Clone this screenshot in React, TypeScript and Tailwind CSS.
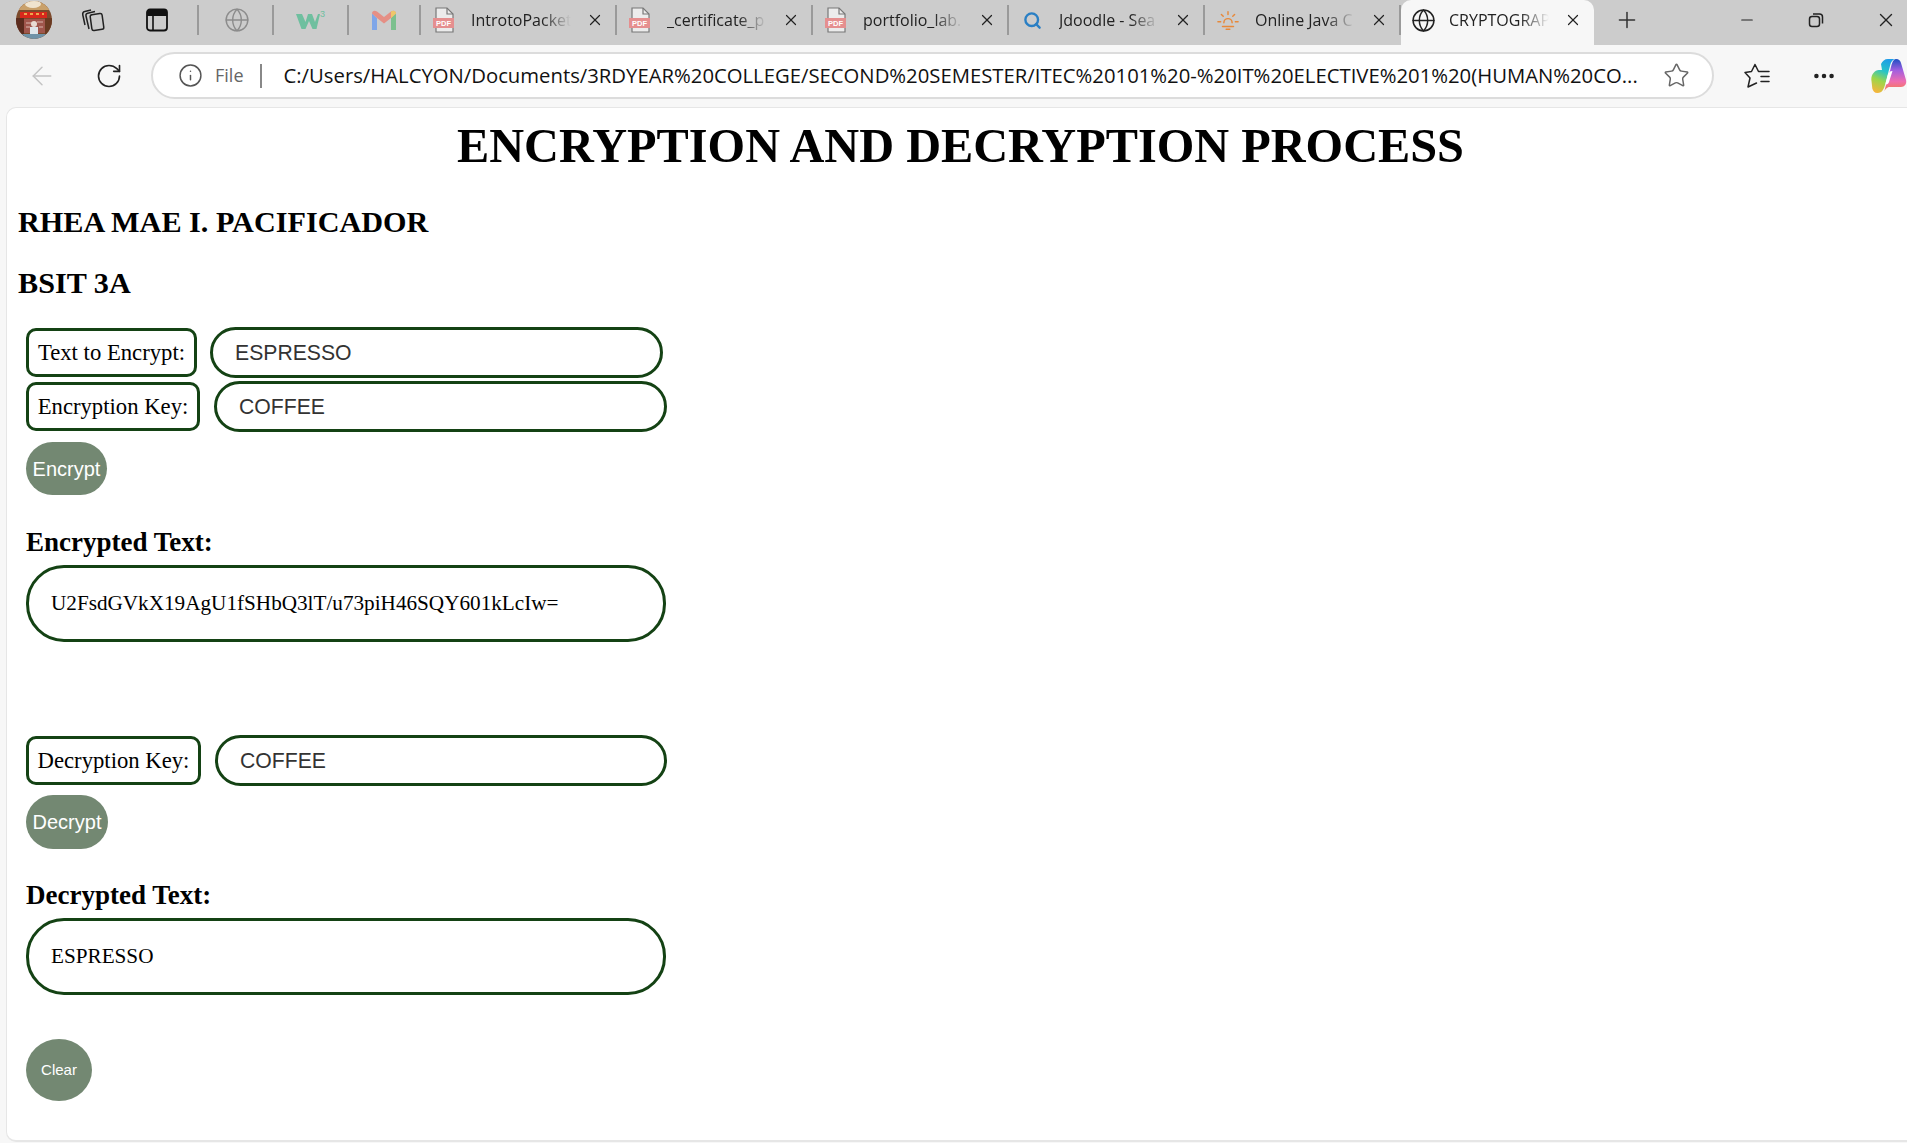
import { X, Plus, Minus, ArrowLeft, RotateCw, Info, Star, MoreHorizontal, Globe, Search } from "lucide-react";
import type { ReactNode } from "react";

const SERIF = "font-['Liberation_Serif',serif]";
const UI = "font-['Open_Sans',sans-serif]";
const FADE = "[mask-image:linear-gradient(to_right,black_68%,transparent_96%)]";

function PdfIcon() {
    return (
        <svg width="22" height="26" viewBox="0 0 22 26" fill="none">
            <path d="M3 1h11l6 6v18H3z" fill="#ececec" stroke="#777" strokeWidth="1.2" />
            <path d="M14 1v6h6" stroke="#777" strokeWidth="1.2" />
            <rect x="0" y="11" width="21" height="10" fill="#e58f8f" />
            <text x="10.5" y="19" fontSize="7.5" fontWeight="700" fill="#fff" textAnchor="middle" fontFamily="Liberation Sans">
                PDF
            </text>
        </svg>
    );
}

function SunIcon() {
    return (
        <svg width="24" height="24" viewBox="0 0 24 24" fill="none" stroke="#e8893a" strokeWidth="1.6" strokeLinecap="round">
            <path d="M7.5 15a4.5 4.5 0 1 1 9 0" />
            <path d="M12 3v3M4.8 6l2 2M19.2 6l-2 2M1 14h3M20 14h3M6 19h12M10 22h4" />
        </svg>
    );
}

function Separator() {
    return <div className="h-[30px] w-[2px] shrink-0 bg-[#9a9a9a]" />;
}

function Tab({ icon, title }: { icon: ReactNode; title: string }) {
    return (
        <div className="flex h-[30px] w-[196px] shrink-0 items-center border-r-2 border-[#9a9a9a]">
            <div className="ml-[12px] flex w-[22px] justify-center">{icon}</div>
            <span className={`ml-[16px] w-[104px] overflow-hidden whitespace-nowrap text-[16px] text-[#222] ${UI} ${FADE}`}>{title}</span>
            <X className="ml-[11px] h-[18px] w-[18px] text-[#222]" strokeWidth={1.6} />
        </div>
    );
}

function TitleBar() {
    return (
        <div className="flex h-[45px] items-center bg-[#cccccc] pb-[5px]">
            {/* profile picture */}
            <svg className="ml-[16px] shrink-0 blur-[0.6px]" width="36" height="38" viewBox="0 0 36 38">
                <defs>
                    <clipPath id="avatarClip">
                        <ellipse cx="18" cy="19" rx="18" ry="19" />
                    </clipPath>
                </defs>
                <g clipPath="url(#avatarClip)">
                    <rect width="36" height="38" fill="#7d4a2c" />
                    <rect width="36" height="9" fill="#c9a06a" />
                    <ellipse cx="17" cy="3" rx="8" ry="4" fill="#f0e4cf" />
                    <rect x="4" y="11" width="27" height="6" fill="#d8281c" />
                    <path d="M8 13h3M14 13h3M20 13h3M26 13h2" stroke="#f4d35e" strokeWidth="1.5" />
                    <rect x="0" y="17" width="8" height="21" fill="#5b2c1f" />
                    <rect x="29" y="17" width="7" height="21" fill="#6a3a22" />
                    <rect x="8" y="18" width="21" height="14" fill="#a0564c" />
                    <path d="M10 22h6M21 21h6M10 26h4M23 26h4" stroke="#d9b6ae" strokeWidth="1.2" />
                    <circle cx="18" cy="23" r="3" fill="#e8dcd4" />
                    <rect x="14" y="26" width="8" height="8" fill="#dfe6ea" />
                    <rect x="0" y="33" width="36" height="5" fill="#6f93a8" />
                </g>
            </svg>
            <svg className="ml-[28px] shrink-0" width="26" height="26" viewBox="0 0 26 26" fill="none" stroke="#222" strokeWidth="1.5">
                <rect x="11" y="7" width="12" height="16" rx="2" transform="rotate(-8 17 15)" />
                <path d="M9 22 6 9c-.3-1.4.4-2.4 1.7-2.7L15 4.6" />
                <path d="M5 18 2.8 8c-.4-2 .5-3.2 2-3.6L11 3" />
            </svg>
            <svg className="ml-[40px] shrink-0" width="22" height="24" viewBox="0 0 22 24" fill="none">
                <rect x="1" y="1.5" width="20" height="21" rx="3" stroke="#111" strokeWidth="1.8" />
                <path d="M1 5a3.5 3.5 0 0 1 3.5-3.5h13A3.5 3.5 0 0 1 21 5v3H1z" fill="#111" />
                <path d="M7 8v14" stroke="#111" strokeWidth="1.6" />
            </svg>
            <div className="ml-[29px]">
                <Separator />
            </div>
            <Globe className="ml-[25px] h-[26px] w-[26px] shrink-0 text-[#8c8c8c]" strokeWidth={1.3} />
            <div className="ml-[22px]">
                <Separator />
            </div>
            <svg className="ml-[22px] shrink-0" width="30" height="22" viewBox="0 0 30 22" fill="#6fbf9f">
                <path d="M0 5h6l3.500 8L12 5h4l3 8 3-8h2l-3.500 15h-4L13 12l-3.500 8h-4z" />
                <text x="24" y="8" fontSize="9" fontFamily="Liberation Sans" fill="#6fbf9f">3</text>
            </svg>
            <div className="ml-[21px]">
                <Separator />
            </div>
            <svg className="ml-[23px] shrink-0" width="24" height="20" viewBox="0 0 24 20" fill="none">
                <path d="M0 3.500V20h5V8z" fill="#7fa6e8" />
                <path d="M24 3.500V20h-5V8z" fill="#7cc08e" />
                <path d="M0 3.500C0 .5 3 0 5 1.500L12 7l7-5.500c2-1.500 5-1 5 2L19 8l-7 5.500L5 8z" fill="#e58f85" />
                <path d="M19 1.500c2-1.500 5-1 5 2L19 8z" fill="#edc76a" />
            </svg>
            <div className="ml-[23px]">
                <Separator />
            </div>

            <Tab icon={<PdfIcon />} title="IntrotoPacket" />
            <Tab icon={<PdfIcon />} title="_certificate_p" />
            <Tab icon={<PdfIcon />} title="portfolio_lab." />
            <Tab icon={<Search className="h-[19px] w-[19px] text-[#2a7fc4]" strokeWidth={3} />} title="Jdoodle - Sea" />
            <Tab icon={<SunIcon />} title="Online Java C" />

            {/* active tab */}
            <div className="flex h-[45px] w-[193px] shrink-0 items-center self-start rounded-t-[10px] bg-[#f7f7f7] pb-[5px]">
                <Globe className="ml-[10px] h-[25px] w-[25px] text-[#222]" strokeWidth={1.4} />
                <span className={`ml-[13px] w-[104px] overflow-hidden whitespace-nowrap text-[16px] text-[#222] ${UI} ${FADE}`}>CRYPTOGRAPHY</span>
                <X className="ml-[11px] h-[18px] w-[18px] text-[#222]" strokeWidth={1.6} />
            </div>
            <Plus className="ml-[20px] h-[26px] w-[26px] text-[#333]" strokeWidth={1.4} />
            <Minus className="ml-[98px] h-[18px] w-[18px] text-[#222]" strokeWidth={1.5} />
            <svg className="ml-[52px]" width="16" height="16" viewBox="0 0 16 16" fill="none" stroke="#222" strokeWidth="1.5">
                <rect x="1.500" y="4.500" width="10" height="10" rx="2.500" />
                <path d="M5 2h6.500A3 3 0 0 1 14.500 5v6.500" />
            </svg>
            <X className="ml-[51px] h-[22px] w-[22px] text-[#222]" strokeWidth={1.5} />
        </div>
    );
}

function CopilotIcon() {
    return (
        <svg className="ml-[34px] shrink-0" width="36" height="34" viewBox="0 0 36 34">
            <defs>
                <linearGradient id="cpLeft" x1="0.6" y1="0" x2="0.3" y2="1">
                    <stop offset="0" stopColor="#1f9de8" />
                    <stop offset="0.35" stopColor="#27c4c8" />
                    <stop offset="0.65" stopColor="#9bd64a" />
                    <stop offset="1" stopColor="#f4b63c" />
                </linearGradient>
                <linearGradient id="cpRight" x1="0.5" y1="0" x2="0.5" y2="1">
                    <stop offset="0" stopColor="#1d4fc4" />
                    <stop offset="0.35" stopColor="#a05fe0" />
                    <stop offset="0.7" stopColor="#ef6db0" />
                    <stop offset="1" stopColor="#f47b4a" />
                </linearGradient>
            </defs>
            <path d="M25 0c3 0 4.500 2 5 4l5 17c1 4-1.500 7-5 7H18c-1 0-3 1-4.500 4 1.500-6 4-15 6-22 .8-3 2-10 5.500-10z" fill="url(#cpRight)" />
            <path d="M10 5c1.500-3 3.500-5 7-5h8c-3 0-4.500 2-5.500 5L14 26c-1 3.500-2.500 8-7.500 8-3 0-4.500-2-5.200-4.500L.5 22C-.5 17 3 11 8 11h3z" fill="url(#cpLeft)" />
            <path d="M16.500 17c1-3 2-5 5-5l-3.500 11c-.5 1.500-1.500 2.500-3 2.500-1 0 .5-4 1.500-8.500z" fill="#fff" />
        </svg>
    );
}

function ToolBar() {
    return (
        <div className="flex h-[62px] items-center bg-[#f7f7f7] pb-[1px]">
            <ArrowLeft className="ml-[27px] h-[30px] w-[30px] shrink-0 text-[#c4c4c4]" strokeWidth={1.2} />
            <RotateCw className="ml-[38px] h-[28px] w-[28px] shrink-0 text-[#222]" strokeWidth={1.4} />
            <div className="ml-[28px] flex h-[47px] w-[1563px] shrink-0 items-center rounded-full border-2 border-[#dcdcdc] bg-white">
                <Info className="ml-[25px] h-[25px] w-[25px] shrink-0 text-[#555]" strokeWidth={1.4} />
                <span className={`ml-[12px] text-[18px] text-[#666] ${UI}`}>File</span>
                <div className="ml-[16px] h-[24px] w-[2px] bg-[#888]" />
                <span className={`ml-[22px] whitespace-nowrap text-[20.300px] text-[#111] ${UI}`}>
                    C:/Users/HALCYON/Documents/3RDYEAR%20COLLEGE/SECOND%20SEMESTER/ITEC%20101%20-%20IT%20ELECTIVE%201%20(HUMAN%20CO...
                </span>
                <Star className="ml-auto mr-[22px] h-[27px] w-[27px] shrink-0 text-[#666]" strokeWidth={1.3} />
            </div>
            <svg className="ml-[30px] shrink-0" width="26" height="26" viewBox="0 0 26 26" fill="none" stroke="#222" strokeWidth="1.5" strokeLinejoin="round" strokeLinecap="round">
                <path d="M25 8.500H14.500L11 1.500 7.500 8.500 1 9.500 6 15 4 24l8.500-4" />
                <path d="M17 13.500h8M17 18.500h8" />
            </svg>
            <MoreHorizontal className="ml-[41px] h-[26px] w-[26px] shrink-0 text-[#222]" strokeWidth={2.2} />
            <CopilotIcon />
        </div>
    );
}

function FieldRow({ label, value, gap, labelW, inputW }: { label: string; value: string; gap: string; labelW: string; inputW: string }) {
    return (
        <div className={`flex items-center ${gap}`}>
            <label className={`flex h-[49px] items-center justify-center whitespace-nowrap rounded-[10px] border-[3px] border-[#144214] pt-[1px] text-[22.700px] text-black ${labelW}`}>
                {label}
            </label>
            <div className={`flex h-[51px] items-center rounded-[26px] border-[3px] border-[#144214] pl-[22px] font-['Liberation_Sans',sans-serif] text-[21.200px] text-[#333] ${inputW}`}>
                {value}
            </div>
        </div>
    );
}

function Output({ value }: { value: string }) {
    return (
        <div className="flex h-[77px] w-[640px] items-center rounded-[38px] border-[3px] border-[#144214] pl-[22px] text-[21.200px] text-black">
            {value}
        </div>
    );
}

function Pill({ children, className }: { children: ReactNode; className: string }) {
    return (
        <button type="button" className={`flex items-center justify-center bg-[#738872] font-['Liberation_Sans',sans-serif] text-white ${className}`}>
            {children}
        </button>
    );
}

export default function App() {
    return (
        <div className="h-[1143px] w-[1907px] overflow-hidden bg-[#f7f7f7]">
            <TitleBar />
            <ToolBar />
            <main className={`ml-[6px] h-[1035px] rounded-tl-[10px] rounded-bl-[10px] border-b-2 border-l border-t border-[#e6e6e6] bg-white ${SERIF}`}>
                <h1 className="mt-[10px] pl-[7px] text-center text-[48.300px] font-bold leading-[56px] text-black">ENCRYPTION AND DECRYPTION PROCESS</h1>
                <div className="pl-[11px]">
                    <h2 className="mt-[30px] text-[30.200px] font-bold leading-[36px] text-black">RHEA MAE I. PACIFICADOR</h2>
                    <h2 className="mt-[25px] text-[30.200px] font-bold leading-[36px] text-black">BSIT 3A</h2>
                </div>
                <div className="mt-[26px] flex flex-col pl-[19px]">
                    <FieldRow label="Text to Encrypt:" value="ESPRESSO" gap="gap-[13px]" labelW="w-[171px]" inputW="w-[453px]" />
                    <div className="mt-[3px]">
                        <FieldRow label="Encryption Key:" value="COFFEE" gap="gap-[14px]" labelW="w-[174px]" inputW="w-[453px]" />
                    </div>
                    <Pill className="mt-[10px] h-[53px] w-[81px] rounded-[27px] text-[20px]">Encrypt</Pill>
                    <h3 className="mt-[32px] text-[27px] font-bold leading-[31px] text-black">Encrypted Text:</h3>
                    <div className="mt-[7px]">
                        <Output value="U2FsdGVkX19AgU1fSHbQ3lT/u73piH46SQY601kLcIw=" />
                    </div>
                    <div className="mt-[93px]">
                        <FieldRow label="Decryption Key:" value="COFFEE" gap="gap-[14px]" labelW="w-[175px]" inputW="w-[452px]" />
                    </div>
                    <Pill className="mt-[9px] h-[54px] w-[82px] rounded-[27px] text-[20px]">Decrypt</Pill>
                    <h3 className="mt-[31px] text-[27px] font-bold leading-[31px] text-black">Decrypted Text:</h3>
                    <div className="mt-[7px]">
                        <Output value="ESPRESSO" />
                    </div>
                    <Pill className="mt-[44px] h-[62px] w-[66px] rounded-[50%] text-[15px]">Clear</Pill>
                </div>
            </main>
        </div>
    );
}
